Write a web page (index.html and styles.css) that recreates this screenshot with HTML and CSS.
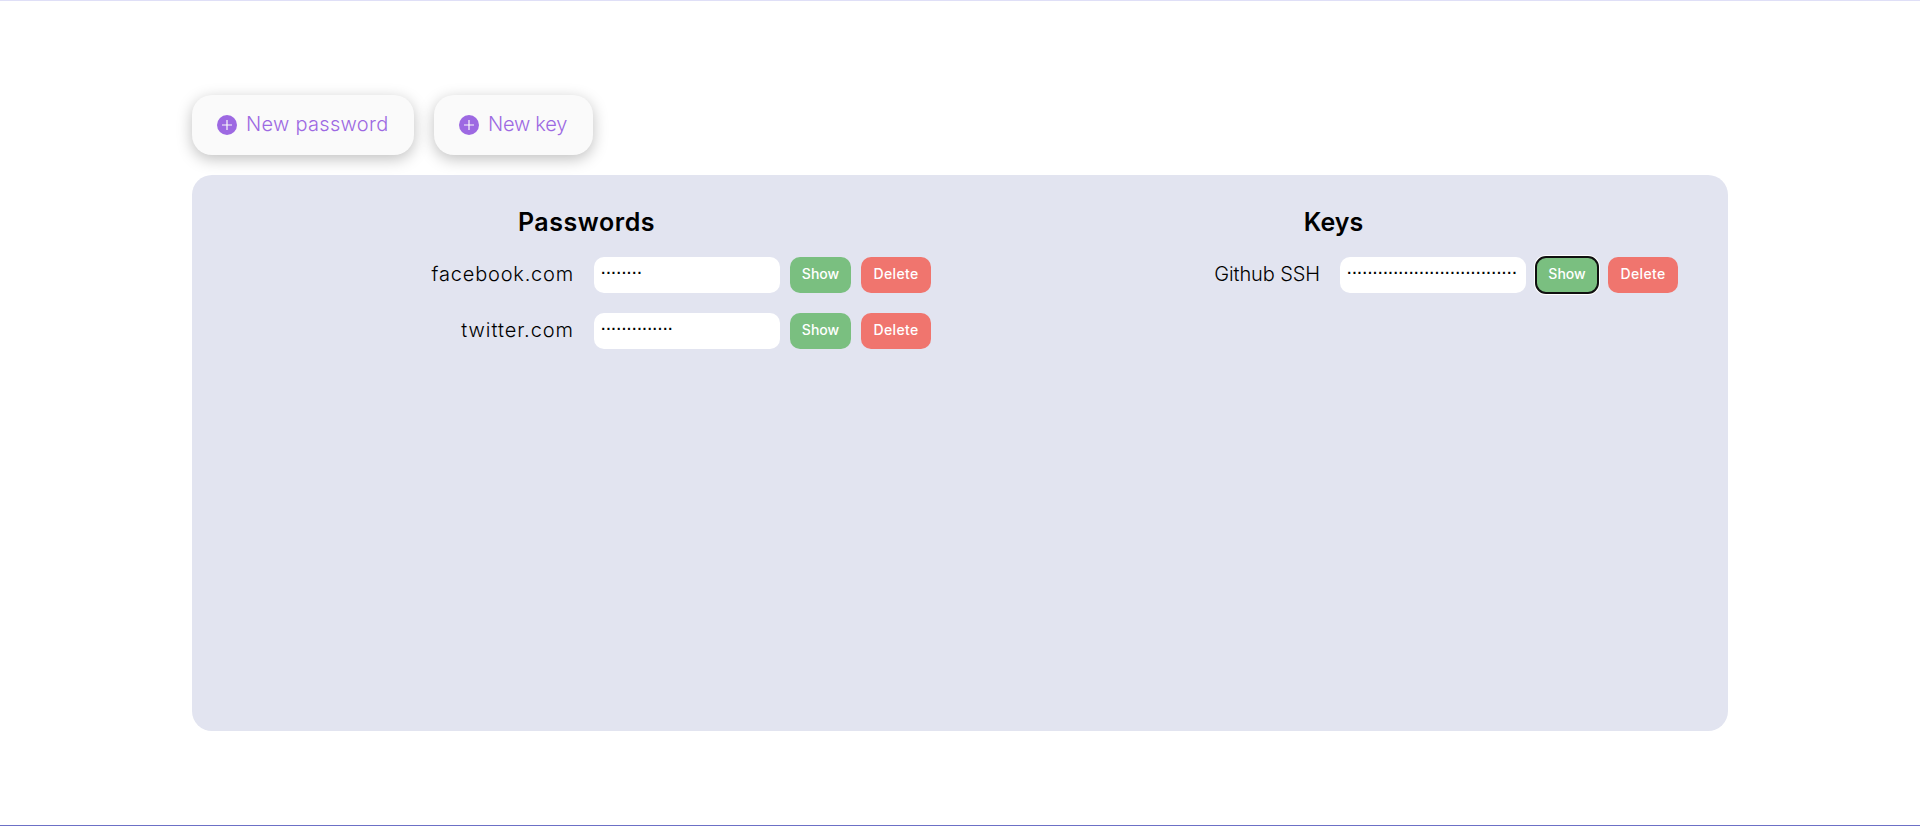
FILE: index.html
```
<!DOCTYPE html>
<html lang="en">
<head>
<meta charset="utf-8">
<title>Passwords</title>
<link rel="stylesheet" href="styles.css">
</head>
<body>
<main class="page">
  <div class="actions">
    <button class="action action-password"><svg class="plus" viewBox="0 0 20 20"><circle cx="10" cy="10" r="10"/><path d="M10 5v10M5 10h10"/></svg><span class="t-newpass">New password</span></button>
    <button class="action action-key"><svg class="plus" viewBox="0 0 20 20"><circle cx="10" cy="10" r="10"/><path d="M10 5v10M5 10h10"/></svg><span class="t-newkey">New key</span></button>
  </div>
  <section class="panel">
    <div class="column passwords">
      <h2 class="heading"><span class="t-passwords">Passwords</span></h2>
      <div class="row"><span class="name"><span class="t-facebook">facebook.com</span></span><div class="field"><span class="dots">········</span></div><button class="btn show">Show</button><button class="btn delete">Delete</button></div>
      <div class="row"><span class="name"><span class="t-twitter">twitter.com</span></span><div class="field"><span class="dots">··············</span></div><button class="btn show">Show</button><button class="btn delete">Delete</button></div>
    </div>
    <div class="column keys">
      <h2 class="heading"><span class="t-keys">Keys</span></h2>
      <div class="row"><span class="name"><span class="t-github">Github SSH</span></span><div class="field"><span class="dots">·································</span></div><button class="btn show focused">Show</button><button class="btn delete">Delete</button></div>
    </div>
  </section>
</main>
</body>
</html>
```
FILE: styles.css
```
* { box-sizing: border-box; }
body { margin: 0; background: #fff; color: #000; font-family: Inter, "Liberation Sans", sans-serif; }
button { border: 0; margin: 0; font-family: inherit; }
.page { height: 826px; padding: 94px 192px 0; border-top: 1px solid #dfdff7; border-bottom: 1px solid #6c70c6; }
.actions { display: flex; gap: 20px; margin-bottom: 20px; }
.action { display: flex; align-items: center; height: 60px; padding: 0 0 0 25px; gap: 9px; border-radius: 20px; background: #fafafa; color: #9d69e2; font-size: 20px; font-weight: 300; line-height: 24px; white-space: nowrap; box-shadow: 0 4px 15px rgba(0, 0, 0, .25); }
.action span { padding-bottom: 2px; }
.action-password { width: 222px; }
.action-key { width: 159px; }
.plus { width: 20px; height: 20px; flex: none; fill: #9d69e2; stroke: #fafafa; stroke-width: 1.2; }
.plus circle { stroke: none; }
.panel { display: flex; height: 556px; padding: 30px 50px 0; border-radius: 20px; background: #e2e4f0; }
.column { display: flex; flex-direction: column; }
.passwords { width: 689px; }
.keys { width: 747px; }
.heading { margin: 0 0 20px; height: 32px; line-height: 34px; font-size: 25px; font-weight: 600; text-align: center; }
.passwords .heading { width: 689px; }
.keys .heading { width: 805px; }
.row { display: flex; align-items: center; justify-content: flex-end; height: 36px; margin-bottom: 20px; }
.name { margin-right: 20px; font-size: 20px; font-weight: 300; line-height: 34px; height: 36px; white-space: nowrap; }
.field { width: 186px; height: 36px; margin-right: 10px; padding-left: 5px; border-radius: 10px; background: #fff; overflow: hidden; line-height: 33px; white-space: nowrap; }
.dots { display: block; font-family: "Liberation Mono", monospace; font-size: 14px; font-weight: 700; letter-spacing: -3.24px; }
.btn { height: 36px; padding: 0 0 2px; border-radius: 10px; color: #fff; font-size: 14px; font-weight: 500; line-height: 34px; }
.show { width: 61px; margin-right: 10px; background: #7abf80; }
.delete { width: 70px; background: #f0756e; letter-spacing: .35px; }
.focused { width: 62px; outline: 2px solid #101010; outline-offset: -1px; box-shadow: 0 0 0 2px #fff; }
.t-newpass { letter-spacing: .3px; }
.t-newkey { letter-spacing: -.25px; }
.t-passwords { letter-spacing: .55px; }
.t-facebook { letter-spacing: .8px; }
.t-twitter { letter-spacing: .95px; }
.t-github { letter-spacing: -.1px; }
```
